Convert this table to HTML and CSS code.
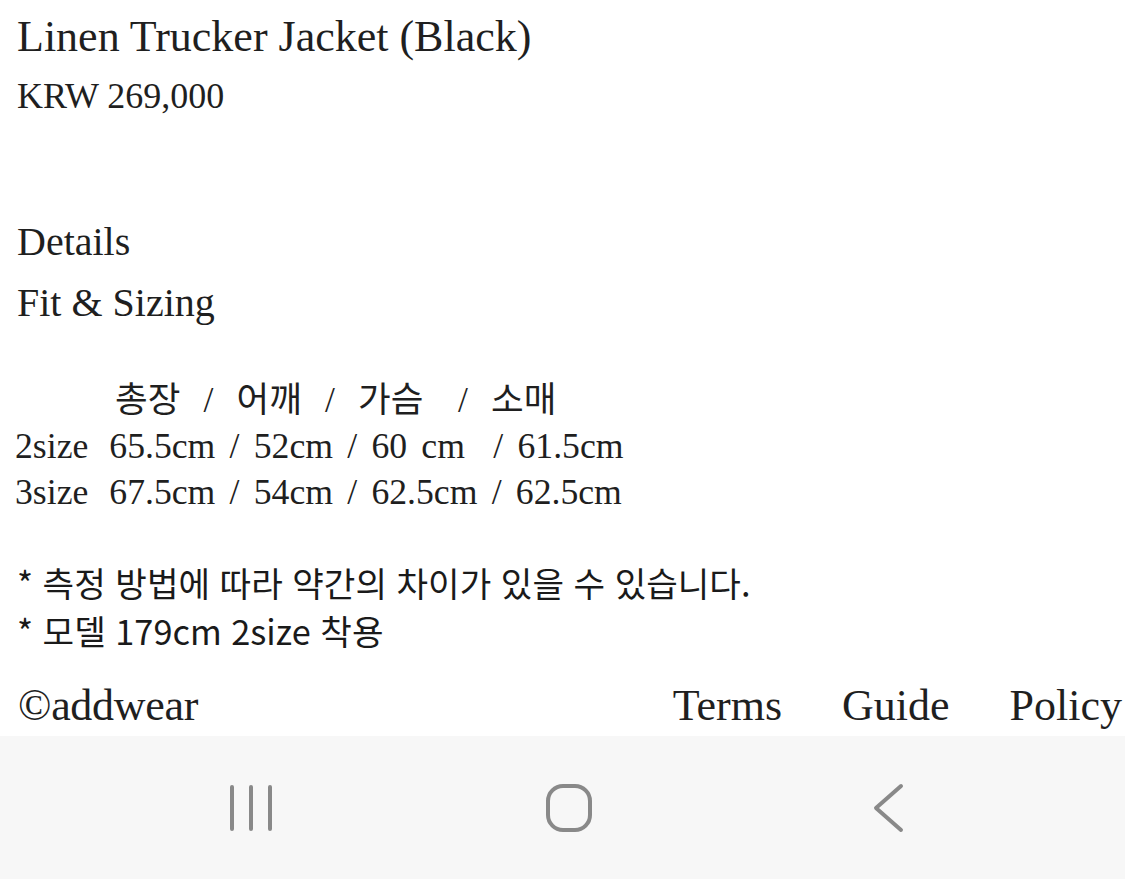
FILE: index.html
```html
<!DOCTYPE html>
<html lang="ko">
<head>
<meta charset="utf-8">
<title>Linen Trucker Jacket (Black)</title>
<link rel="stylesheet" href="styles.css">
</head>
<body>
<div class="page">
  <div class="content">
    <h1 class="title">Linen Trucker Jacket (Black)</h1>
    <div class="price">KRW 269,000</div>
    <div class="tab">Details</div>
    <div class="tab tab-fit">Fit &amp; Sizing</div>
    <div class="sizes">
      <div class="row row-head">총장  /  어깨  /  가슴   /  소매</div>
      <div class="row"><span class="sz">2size</span>65.5cm / 52cm / 60 cm  / 61.5cm</div>
      <div class="row"><span class="sz">3size</span>67.5cm / 54cm / 62.5cm / 62.5cm</div>
    </div>
    <div class="notes">
      <div class="note">* 측정 방법에 따라 약간의 차이가 있을 수 있습니다.</div>
      <div class="note">* 모델 179cm 2size 착용</div>
    </div>
    <div class="footer">
      <span class="copy">©addwear</span>
      <div class="links">
        <span>Terms</span>
        <span>Guide</span>
        <span>Policy</span>
      </div>
    </div>
  </div>
  <div class="navbar">
    <svg class="nav-recent" width="50" height="50" viewBox="0 0 50 50">
      <path d="M6 4 V46 M25 4 V46 M44 4 V46" stroke="#898989" stroke-width="4" stroke-linecap="round" fill="none"/>
    </svg>
    <svg class="nav-home" width="52" height="52" viewBox="0 0 52 52">
      <rect x="5" y="4" width="42" height="44" rx="15" ry="15" stroke="#898989" stroke-width="4" fill="none"/>
    </svg>
    <svg class="nav-back" width="40" height="50" viewBox="0 0 40 50">
      <path d="M32 3 L7 25 L32 47" stroke="#898989" stroke-width="4" stroke-linecap="round" stroke-linejoin="round" fill="none"/>
    </svg>
  </div>
</div>
</body>
</html>
```

FILE: styles.css
```css
html, body {
  margin: 0;
  padding: 0;
  background: #ffffff;
}

body {
  font-family: "Liberation Serif", "Noto Sans CJK KR", serif;
  color: #1f1f1f;
}

.page {
  width: 1125px;
  height: 879px;
  display: flex;
  flex-direction: column;
  overflow: hidden;
}

.content {
  padding-left: 17px;
  padding-right: 3px;
}

.title {
  margin: 0;
  font-weight: normal;
  font-size: 44px;
  line-height: 74px;
  height: 74px;
}

.price {
  font-size: 36px;
  line-height: 44px;
  height: 44px;
}

.tab {
  font-size: 40px;
  line-height: 61px;
  height: 61px;
  margin-top: 93px;
}

.tab-fit {
  margin-top: 0;
}

.sizes {
  margin-top: 44px;
  margin-left: -2px;
}

.row {
  font-size: 35.7px;
  line-height: 46px;
  height: 46px;
  white-space: pre;
  word-spacing: 5.3px;
}

.row-head {
  font-size: 35.5px;
  word-spacing: 2.7px;
  padding-left: 100px;
}

.sz {
  display: inline-block;
  margin-right: 21px;
  word-spacing: 0;
}

.notes {
  margin-top: 43px;
  font-family: "Noto Sans CJK KR", "Noto Sans", sans-serif;
}

.note {
  font-size: 34.3px;
  line-height: 48px;
  height: 48px;
  color: #1a1a1a;
}

.footer {
  margin-top: 22px;
  height: 60px;
  display: flex;
  justify-content: space-between;
  align-items: center;
  font-size: 44px;
  line-height: 60px;
}

.copy {
  margin-left: 1px;
  letter-spacing: -0.3px;
}

.links {
  display: flex;
  gap: 60px;
}

.navbar {
  flex: 1;
  background: #f7f7f7;
  display: flex;
  align-items: center;
}

.nav-recent {
  margin-left: 226px;
}

.nav-home {
  margin-left: 267px;
}

.nav-back {
  margin-left: 274px;
}
```
